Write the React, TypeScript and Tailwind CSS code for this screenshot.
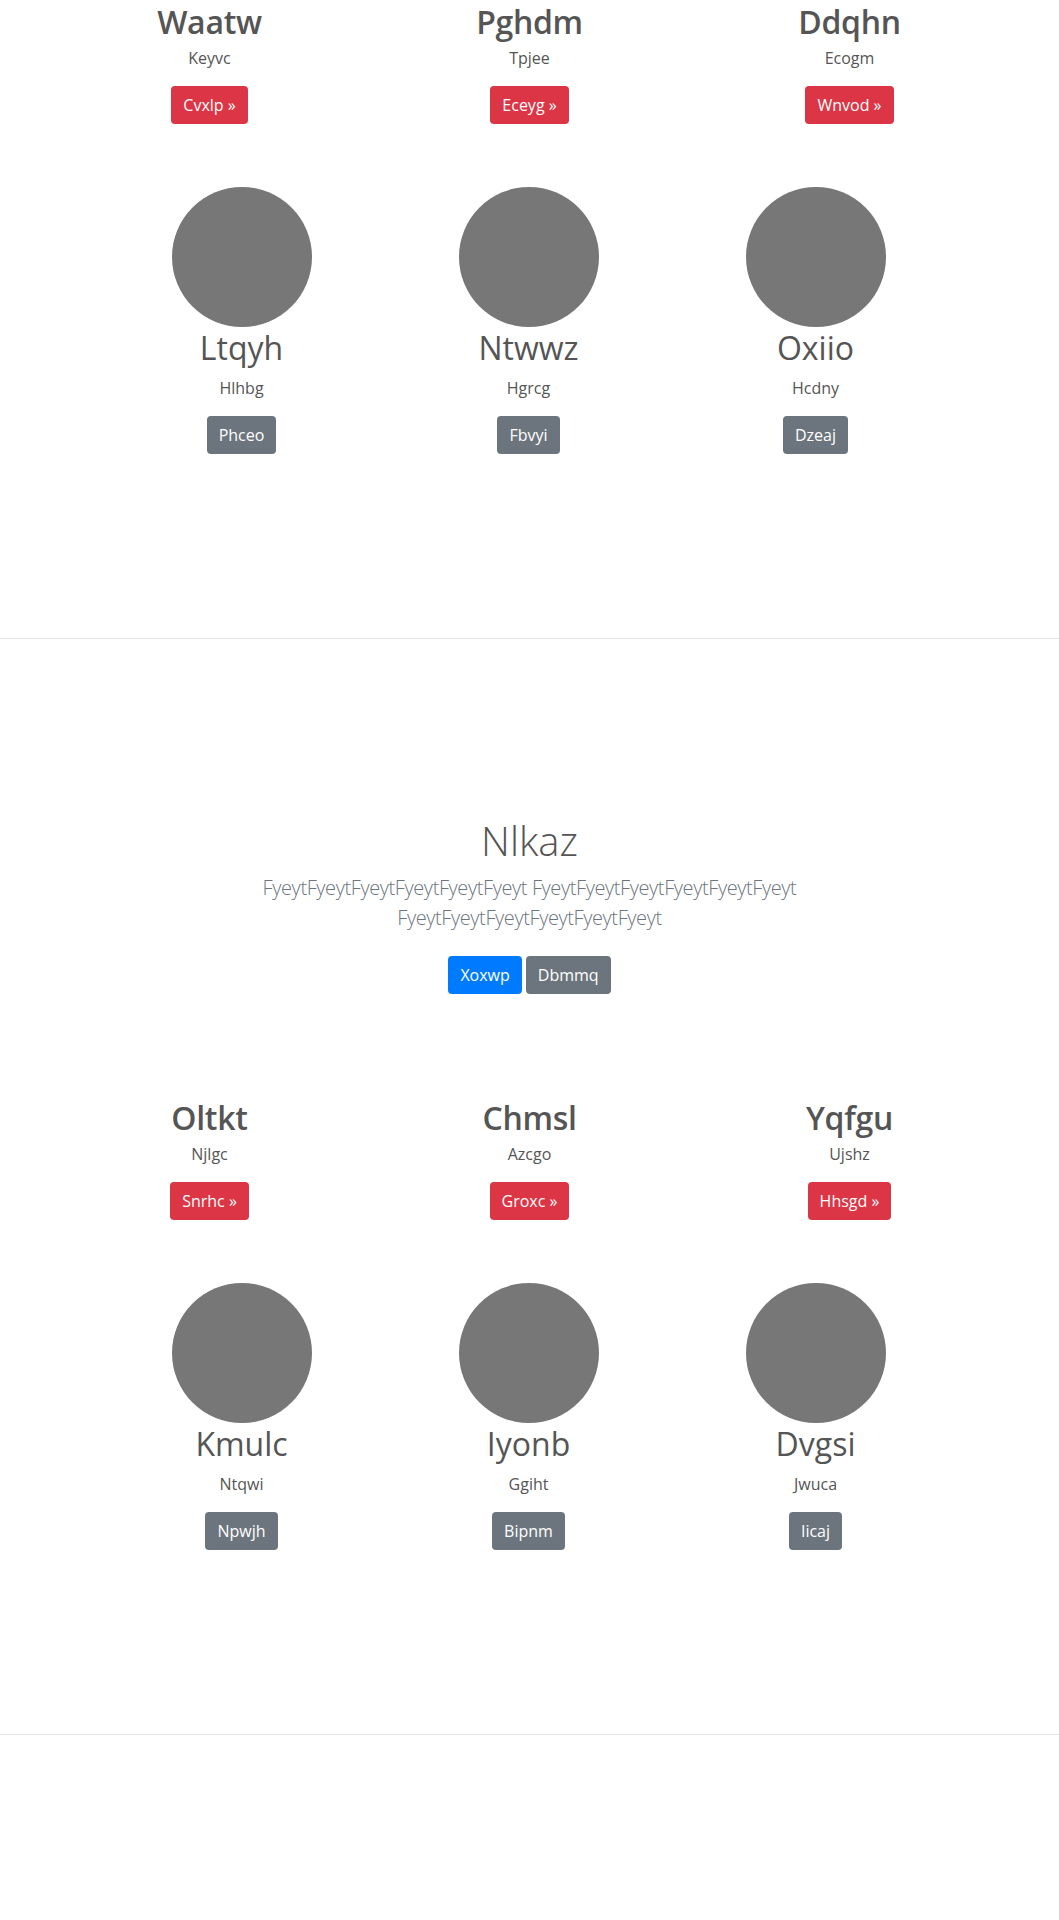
import React from "react";

type Feature = { title: string; text: string; cta: string };
type Person = { name: string; text: string; cta: string };

const blocks: { features: Feature[]; people: Person[] }[] = [
  {
    features: [
      { title: "Waatw", text: "Keyvc", cta: "Cvxlp »" },
      { title: "Pghdm", text: "Tpjee", cta: "Eceyg »" },
      { title: "Ddqhn", text: "Ecogm", cta: "Wnvod »" },
    ],
    people: [
      { name: "Ltqyh", text: "Hlhbg", cta: "Phceo" },
      { name: "Ntwwz", text: "Hgrcg", cta: "Fbvyi" },
      { name: "Oxiio", text: "Hcdny", cta: "Dzeaj" },
    ],
  },
  {
    features: [
      { title: "Oltkt", text: "Njlgc", cta: "Snrhc »" },
      { title: "Chmsl", text: "Azcgo", cta: "Groxc »" },
      { title: "Yqfgu", text: "Ujshz", cta: "Hhsgd »" },
    ],
    people: [
      { name: "Kmulc", text: "Ntqwi", cta: "Npwjh" },
      { name: "Iyonb", text: "Ggiht", cta: "Bipnm" },
      { name: "Dvgsi", text: "Jwuca", cta: "Iicaj" },
    ],
  },
];

const lead = "FyeytFyeytFyeytFyeytFyeytFyeyt FyeytFyeytFyeytFyeytFyeytFyeyt FyeytFyeytFyeytFyeytFyeytFyeyt";

function Btn({ children, color }: { children: React.ReactNode; color: string }) {
  return (
    <button className={`${color} text-white text-[16px] leading-[24px] px-3 py-[7px] rounded-[4px]`}>
      {children}
    </button>
  );
}

function Marketing({ features, people }: { features: Feature[]; people: Person[] }) {
  return (
    <div>
      <div className="w-[960px] mx-auto grid grid-cols-3">
        {features.map((f) => (
          <div key={f.title} className="flex flex-col items-center">
            <h2 className="mt-[3px] text-[32px] leading-[38px] font-semibold tracking-[-0.3px] text-[#555]">{f.title}</h2>
            <p className="mt-[5px] text-[16px] leading-[24px] text-[#555]">{f.text}</p>
            <div className="mt-4">
              <Btn color="bg-[#dc3545]">{f.cta}</Btn>
            </div>
          </div>
        ))}
      </div>
      <div className="w-[861px] mx-auto grid grid-cols-3 mt-[63px]">
        {people.map((p) => (
          <div key={p.name} className="flex flex-col items-center -translate-x-[1px]">
            <div className="w-[140px] h-[140px] rounded-full bg-[#777]" />
            <h2 className="mt-[2px] text-[32px] leading-[38px] font-normal text-[#555]">{p.name}</h2>
            <p className="mt-[9px] text-[16px] leading-[24px] text-[#555]">{p.text}</p>
            <div className="mt-4">
              <Btn color="bg-[#6c757d]">{p.cta}</Btn>
            </div>
          </div>
        ))}
      </div>
    </div>
  );
}

function Jumbo() {
  return (
    <section className="text-center pt-[178px]">
      <h1 className="text-[40px] leading-[48px] font-light text-[#555]">Nlkaz</h1>
      <p className="mt-2 mx-auto max-w-[610px] text-[20px] leading-[30px] font-light tracking-[-0.4px] text-[#6c757d]">{lead}</p>
      <div className="mt-[23px] flex justify-center gap-1">
        <Btn color="bg-[#007bff]">Xoxwp</Btn>
        <Btn color="bg-[#6c757d]">Dbmmq</Btn>
      </div>
    </section>
  );
}

export default function App() {
  return (
    <div className="w-[1059px] h-[1920px] bg-white overflow-hidden" style={{ fontFamily: '"Open Sans", "Noto Sans", sans-serif' }}>
      <Marketing {...blocks[0]} />
      <div className="mt-[184px] border-t border-[#e5e5e5]" />
      <Jumbo />
      <div className="mt-[102px]">
        <Marketing {...blocks[1]} />
      </div>
      <div className="mt-[184px] border-t border-[#e5e5e5]" />
    </div>
  );
}
